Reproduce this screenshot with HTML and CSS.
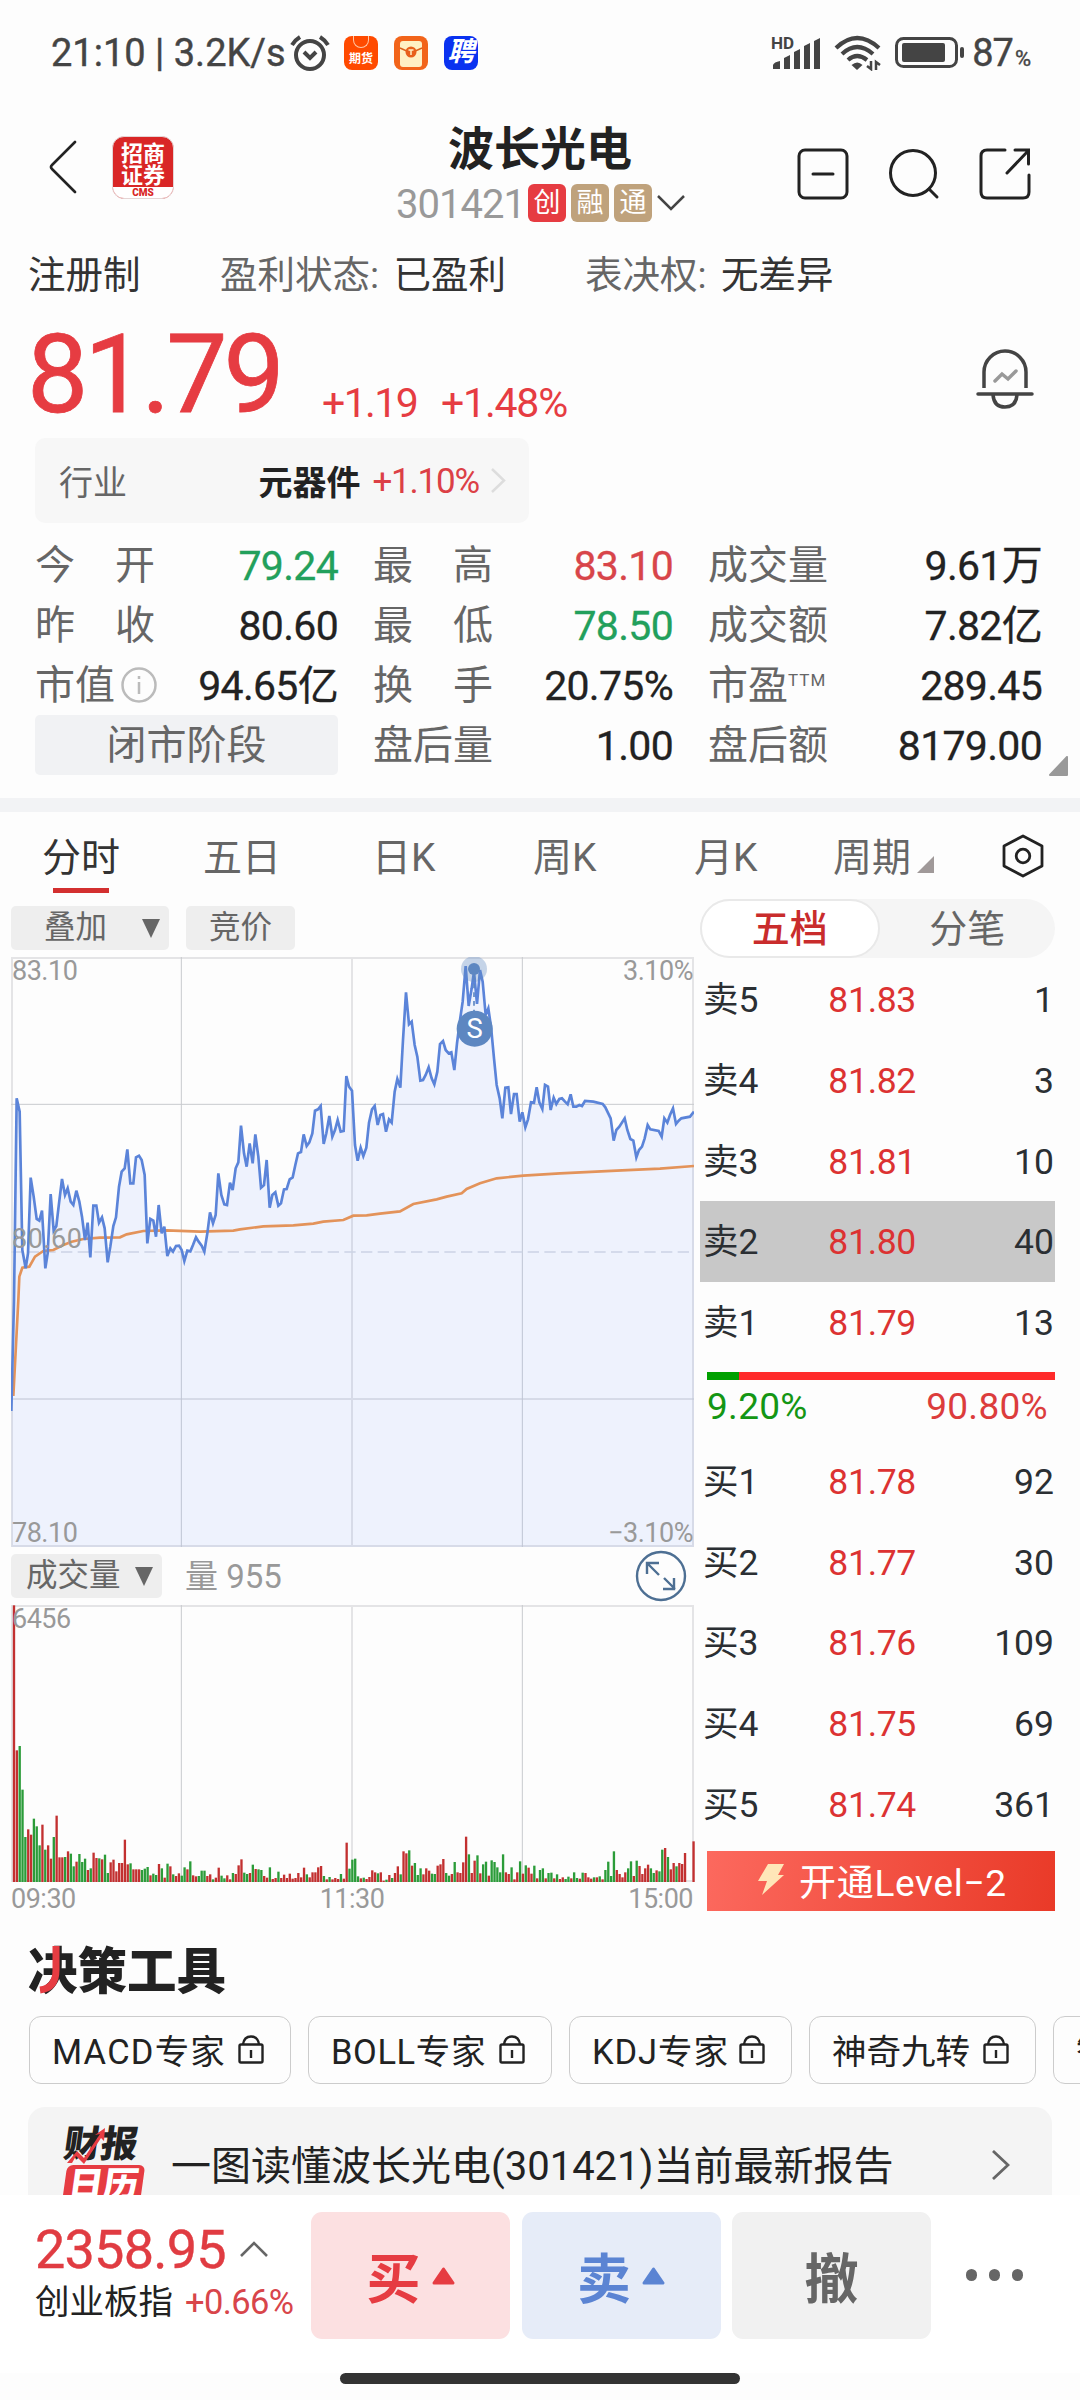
FILE: index.html
```html
<!DOCTYPE html>
<html lang="zh-CN">
<head>
    <meta charset="UTF-8">
    <title>波长光电 301421</title>
    <link rel="stylesheet" href="styles.css">
</head>
<body>
<div class="status">
    <span class="status-text">21:10 | 3.2K/s</span>
    <svg class="alarm" width="40" height="36" viewBox="0 0 40 36" fill="none" stroke="#444" stroke-width="4">
        <circle cx="20" cy="20" r="14"/>
        <path d="M14 17l6 6 6-6M2 10q3-5 8-8M38 10q-3-5-8-8"/>
    </svg>
    <span class="app app-futures"><i></i>期货</span>
    <span class="app app-mail"><svg width="34" height="34" viewBox="0 0 34 34"><rect x="6" y="5" width="22" height="26" rx="3" fill="#fff0c4"/><path d="M6 12l11 5 11-5" fill="none" stroke="#d9601c" stroke-width="1.5"/><circle cx="17" cy="16" r="5.5" fill="#e8601c"/><path d="M14.500 14h5M17 14v5" stroke="#fff0c4" stroke-width="1.500"/></svg></span>
    <span class="app app-job">聘</span>
    <div class="status-right">
        <svg class="signal" width="50" height="34" viewBox="0 0 50 34">
            <text x="0" y="13" class="hd">HD</text>
            <path d="M2 33v-4q1-3 7-4v8zM13 33v-11l6-3v14zM23 33v-17l6-3v20zM33 33V10l6-3v26zM43 33V5l6-3v31z" fill="#444"/>
        </svg>
        <svg class="wifi" width="47" height="36" viewBox="0 0 47 36" fill="none" stroke="#444" stroke-width="4.200">
            <path d="M2 13q21-20 43 0M8 19q15-14 31 0M14 25q9-8 19 0"/>
            <path d="M17.500 30q6-5 11 0l-5.500 5z" fill="#444" stroke="none"/>
            <path d="M37 26v8l-4-3M42 35v-8l4 3" stroke-width="2.500"/>
        </svg>
        <svg class="battery" width="69" height="32" viewBox="0 0 69 32">
            <rect x="1.500" y="1.500" width="60" height="28" rx="7" fill="none" stroke="#444" stroke-width="3"/>
            <rect x="7" y="6" width="43" height="19" rx="2" fill="#444"/>
            <rect x="65" y="10" width="4" height="11" rx="2" fill="#444"/>
        </svg>
        <span class="level">87<small>%</small></span>
    </div>
</div>

<div class="header">
    <svg class="back" width="28" height="54" viewBox="0 0 28 54" fill="none" stroke="#222" stroke-width="2.600" stroke-linecap="round"><path d="M26 2L3 25q-2 2 0 4l23 23"/></svg>
    <div class="broker"><div>招商<br>证券</div><b>CMS</b></div>
    <div class="stock">
        <h1>波长光电</h1>
        <div class="code"><span>301421</span><i class="tag red">创</i><i class="tag">融</i><i class="tag">通</i><svg width="28" height="16" viewBox="0 0 28 16" fill="none" stroke="#444" stroke-width="2.500"><path d="M1 1l13 13L27 1"/></svg></div>
    </div>
    <div class="actions">
        <svg width="52" height="52" viewBox="0 0 52 52" fill="none" stroke="#222" stroke-width="3" stroke-linecap="round"><rect x="2" y="2" width="48" height="48" rx="6"/><path d="M16 26h20"/></svg>
        <svg width="52" height="52" viewBox="0 0 52 52" fill="none" stroke="#222" stroke-width="3" stroke-linecap="round"><circle cx="25" cy="25" r="22.500"/><path d="M41 41l8 8"/></svg>
        <svg width="52" height="52" viewBox="0 0 52 52" fill="none" stroke="#222" stroke-width="3" stroke-linecap="round"><path d="M26 2H8Q2 2 2 8v36q0 6 6 6h36q6 0 6-6V27M36 2h13.500V16M49 3L28 25"/></svg>
    </div>
</div>

<div class="facts">
    <div class="fact-a"><b>注册制</b></div>
    <div class="fact-b">盈利状态: <b>已盈利</b></div>
    <div>表决权: <b>无差异</b></div>
</div>

<div class="quote">
    <span class="price">81.79</span>
    <span class="change">+1.19</span>
    <span class="change pct">+1.48%</span>
    <svg class="bell" width="58" height="60" viewBox="0 0 58 60" fill="none" stroke="#444" stroke-width="3.500" stroke-linecap="round">
        <path d="M8 39V23a21 21 0 0 1 42 0v16" stroke-linecap="butt"/><path d="M2 45h54M17 46q1 12 12 12t12-12"/><path d="M19 32l7-7 6 5 8-8" stroke="#999"/>
    </svg>
</div>

<div class="industry">
    <span>行业</span>
    <b>元器件</b>
    <em>+1.10%</em>
    <svg width="15" height="25" viewBox="0 0 15 25" fill="none" stroke="#ddd" stroke-width="2.500"><path d="M1 1l12 11.500L1 24"/></svg>
</div>

<div class="stats">
    <div><span class="lab">今 开</span><span class="val down">79.24</span></div>
    <div><span class="lab">最 高</span><span class="val up">83.10</span></div>
    <div><span class="lab">成交量</span><span class="val">9.61万</span></div>
    <div><span class="lab">昨 收</span><span class="val">80.60</span></div>
    <div><span class="lab">最 低</span><span class="val down">78.50</span></div>
    <div><span class="lab">成交额</span><span class="val">7.82亿</span></div>
    <div><span>市值</span><svg class="info" width="36" height="36" viewBox="0 0 36 36" fill="none" stroke="#bbb" stroke-width="2.500"><circle cx="18" cy="18" r="16.500"/><path d="M18 15v12M18 9v3"/></svg><span class="val">94.65亿</span></div>
    <div><span class="lab">换 手</span><span class="val">20.75%</span></div>
    <div><span>市盈</span><small>TTM</small><span class="val">289.45</span></div>
    <div class="phase">闭市阶段</div>
    <div><span class="lab">盘后量</span><span class="val">1.00</span></div>
    <div><span class="lab">盘后额</span><span class="val">8179.00</span></div>
    <svg class="corner" width="20" height="20"><path d="M18 1v18H1z" fill="#999" stroke="#999" stroke-width="2" stroke-linejoin="round"/></svg>
</div>

<div class="tabs">
    <span class="on">分时</span>
    <span>五日</span>
    <span>日K</span>
    <span>周K</span>
    <span>月K</span>
    <span class="more">周期<svg width="17" height="17"><path d="M17 0v17H0z" fill="#a09999"/></svg></span>
    <svg class="gear" width="42" height="44" viewBox="0 0 42 44" fill="none" stroke="#222" stroke-width="2.800" stroke-linejoin="round"><path d="M21 2l19 10v20L21 42 2 32V12z"/><circle cx="21" cy="22" r="6.800"/></svg>
</div>

<div class="panel">
    <div class="left">
        <div class="tools"><span class="btn overlay">叠加<i class="tri"></i></span><span class="btn auction">竞价</span></div>
        <div class="chart">
            <svg width="683" height="590" viewBox="33 411 2049 1770">
                <g fill="none" stroke="#c8cace" stroke-width="3">
                    <path d="M33 853H2082M33 1737H2082M544 411V2181M1567 411V2181"/>
                    <path d="M1056 411V2181" stroke="#e4e4e6" stroke-width="6"/>
                    <path d="M33 1296H2082" stroke="#d6dae2" stroke-width="5" stroke-dasharray="34 16"/>
                </g>
                <polygon class="area" id="area"/>
                <polyline class="avg" points="40,1728 55,1440 58,1370 67,1343 88,1340 105,1310 130,1293 160,1290 190,1275 215,1265 250,1257 300,1253 360,1252 380,1243 430,1233 500,1231 600,1235 700,1232 720,1228 790,1219 880,1216 940,1211 970,1205 1030,1200 1060,1187 1100,1186 1140,1181 1200,1174 1240,1152 1310,1138 1340,1130 1385,1120 1400,1107 1440,1090 1490,1075 1570,1067 1680,1060 1850,1052 1980,1046 2082,1038"/>
                <polyline class="line" id="line" points="34,1773 42,1440 50,835 59,875 67,1290 77,1345 84,1300 92,1073 101,1130 110,1197 118,1202 126,1172 136,1345 143,1300 152,1122 161,1232 169,1218 177,1150 186,1077 195,1125 203,1105 212,1145 220,1155 229,1112 238,1145 246,1190 255,1260 263,1208 271,1312 280,1157 289,1157 297,1208 306,1192 314,1225 323,1327 331,1280 340,1218 348,1192 357,1100 365,1055 374,1045 382,988 391,1090 400,1090 408,1012 417,1007 425,1020 434,1065 442,1270 451,1197 460,1202 468,1250 476,1155 485,1240 493,1220 502,1308 511,1285 519,1295 528,1278 537,1277 545,1290 553,1323 562,1292 571,1294 579,1275 588,1252 596,1265 605,1277 613,1295 622,1240 630,1177 639,1210 647,1185 655,1060 664,1125 673,1153 681,1155 690,1088 698,1110 707,1045 715,1027 723,917 732,1000 740,1040 749,970 758,1030 766,943 775,1010 783,1103 792,1095 800,1020 809,1163 817,1125 826,1117 835,1157 843,1150 852,1108 860,1107 869,1078 878,1072 886,1035 894,1000 903,996 911,943 920,978 928,967 937,940 945,872 954,868 962,858 971,972 979,940 988,888 997,950 1005,930 1013,900 1022,935 1031,933 1039,768 1047,800 1056,812 1065,975 1073,1022 1082,983 1090,1008 1099,983 1107,908 1116,868 1124,858 1133,915 1141,885 1149,882 1158,935 1167,898 1175,908 1184,815 1192,777 1201,803 1209,660 1218,517 1227,613 1235,605 1244,675 1252,710 1261,782 1269,780 1277,765 1286,742 1295,775 1303,793 1312,755 1320,672 1329,663 1337,690 1346,700 1354,697 1363,750 1371,670 1380,600 1388,545 1397,438 1406,558 1415,505 1422,455 1431,552 1440,450 1448,485 1457,585 1465,565 1473,620 1482,715 1490,795 1499,835 1507,895 1516,803 1525,802 1533,882 1542,822 1550,822 1559,905 1567,877 1576,922 1584,898 1593,847 1602,848 1610,802 1618,847 1627,867 1635,795 1644,800 1652,870 1661,833 1669,852 1678,837 1686,835 1695,845 1703,853 1712,823 1720,860 1729,860 1738,855 1746,858 1755,843 1780,845 1808,852 1816,862 1832,895 1841,962 1849,930 1858,920 1874,895 1882,930 1891,957 1900,962 1909,1012 1917,990 1926,980 1934,955 1943,915 1951,928 1976,933 1985,950 1993,895 2002,908 2010,885 2019,865 2028,912 2036,902 2044,895 2070,890 2082,875"/>
                <circle cx="1422" cy="447" r="39" fill="#5d87c1" opacity=".35"/>
                <circle cx="1422" cy="447" r="18" fill="#5d87c1"/>
                <path d="M1422 465V575" stroke="#5d87c1" stroke-width="5" stroke-dasharray="14 12"/>
                <circle cx="1424" cy="626" r="54" fill="#5d87c1"/>
                <text x="1424" y="655" class="sell">S</text>
            </svg>
            <span class="axis tl">83.10</span><span class="axis tr">3.10%</span>
            <span class="axis ml">80.60</span>
            <span class="axis bl">78.10</span><span class="axis br">−3.10%</span>
        </div>
        <div class="tools"><span class="btn volume">成交量<i class="tri"></i></span><span class="amount">量 955</span>
            <svg class="expand" width="52" height="52" viewBox="0 0 52 52" fill="none" stroke="#4d6f93" stroke-width="2.400"><circle cx="26" cy="26" r="24"/><path d="M12 24V13h12M12.500 13.500L24 25M29 28l11 11M39 28v11H28"/></svg>
        </div>
        <div class="chart vol">
            <svg width="685" height="277" viewBox="33 315 2055 831">
                <path d="M544 315V1146M1567 315V1146" stroke="#c8cace" stroke-width="3"/>
                <path d="M1056 315V1146" stroke="#e4e4e6" stroke-width="6"/>
                <g id="bars"></g>
            </svg>
            <span class="axis tl">6456</span>
        </div>
        <div class="times"><span>09:30</span><span>11:30</span><span>15:00</span></div>
    </div>

    <div class="book">
        <div class="switch"><span class="on">五档</span><span>分笔</span></div>
        <div class="row"><span>卖5</span><b>81.83</b><span>1</span></div>
        <div class="row"><span>卖4</span><b>81.82</b><span>3</span></div>
        <div class="row"><span>卖3</span><b>81.81</b><span>10</span></div>
        <div class="row picked"><span>卖2</span><b>81.80</b><span>40</span></div>
        <div class="row"><span>卖1</span><b>81.79</b><span>13</span></div>
        <div class="ratio"><i style="width: 9.2%"></i></div>
        <div class="ratio-text"><span>9.20%</span><b>90.80%</b></div>
        <div class="row"><span>买1</span><b>81.78</b><span>92</span></div>
        <div class="row"><span>买2</span><b>81.77</b><span>30</span></div>
        <div class="row"><span>买3</span><b>81.76</b><span>109</span></div>
        <div class="row"><span>买4</span><b>81.75</b><span>69</span></div>
        <div class="row"><span>买5</span><b>81.74</b><span>361</span></div>
        <div class="level2"><svg width="26" height="31" viewBox="0 0 26 31"><path d="M10 0h16l-6 11h6L4 31l5-14H0z" fill="#ffe6b8"/></svg>开通Level−2</div>
    </div>
</div>

<h2>决策工具<svg width="40" height="50" viewBox="0 0 40 50" fill="none" stroke="#e63c42" stroke-width="7"><path d="M27 2v24q0 18-16 20"/></svg></h2>

<div class="chips">
    <span class="chip">MACD专家<svg class="lock"><use href="#lock"/></svg></span>
    <span class="chip">BOLL专家<svg class="lock"><use href="#lock"/></svg></span>
    <span class="chip">KDJ专家<svg class="lock"><use href="#lock"/></svg></span>
    <span class="chip">神奇九转<svg class="lock"><use href="#lock"/></svg></span>
    <span class="chip">智</span>
</div>

<div class="report">
    <div class="report-logo">
        <b>财报</b><i>日历</i>
        <svg width="44" height="38" viewBox="0 0 44 38"><path d="M2 36l10-12 7 7L35 7l-5 1 10-7-1 13-3-3-17 26-8-8-4 7z" fill="#e63c42"/></svg>
    </div>
    <span>一图读懂波长光电(301421)当前最新报告</span>
    <svg width="19" height="30" viewBox="0 0 19 30" fill="none" stroke="#666" stroke-width="2.800"><path d="M2 1l15 14L2 29"/></svg>
</div>

<div class="bottom">
    <div class="index">
        <div class="index-top">2358.95<svg width="28" height="16" viewBox="0 0 28 16" fill="none" stroke="#666" stroke-width="2.600"><path d="M1 15L14 2l13 13"/></svg></div>
        <div class="index-sub">创业板指<em>+0.66%</em></div>
    </div>
    <div class="trade buy">买<svg width="23" height="18"><path d="M11.500 2l9.500 14H2z" fill="currentColor" stroke="currentColor" stroke-width="3" stroke-linejoin="round"/></svg></div>
    <div class="trade sell-btn">卖<svg width="23" height="18"><path d="M11.500 2l9.500 14H2z" fill="currentColor" stroke="currentColor" stroke-width="3" stroke-linejoin="round"/></svg></div>
    <div class="trade">撤</div>
    <div class="dots"><i></i><i></i><i></i></div>
</div>
<div class="home"></div>

<svg width="0" height="0" class="defs">
    <symbol id="lock" viewBox="0 0 26 29"><g fill="none" stroke="#222" stroke-width="2.400"><rect x="1.500" y="9.500" width="23" height="18" rx="1.500"/><path d="M5 9.500q1-8 8-8t8 8M13 15v8"/></g></symbol>
</svg>

<script>
    const line = document.getElementById("line");
    document.getElementById("area").setAttribute("points", "34,2181 " + line.getAttribute("points") + " 2082,2181");

    // one bar per minute: colour letter + height, "-" is a minute without trades
    const volumes = "r830 r395 g408 g277 g135 r158 r142 g190 g167 g110 r172 g97 r110 r70 g135 r199 r74 r74 g75 r92 " +
        "g85 g47 r61 g84 g60 g70 r36 g41 r88 r72 g71 r68 g82 g27 r59 r67 r32 r57 r57 r127 " +
        "r53 g56 r38 r38 r38 g36 g40 g45 r20 g25 g21 r54 g41 r13 g55 r47 g23 r18 r26 g19 " +
        "g44 r38 g62 r20 r17 g18 g34 g34 r18 r23 g8 r13 r43 g19 g11 r20 r8 g27 r24 r50 " +
        "r68 g28 g24 r27 g52 r39 g38 g36 r18 r13 g44 r9 r12 g31 r12 r22 r12 r25 r10 r12 " +
        "r27 r14 r43 g23 r14 r29 r29 r44 r48 g18 r8 g15 r8 r12 r9 g24 r10 r118 g40 g67 " +
        "g70 g17 r11 g13 r9 r15 r35 r29 g26 r29 r4 g7 r21 g12 r27 r47 g23 r92 r86 g95 " +
        "r49 g57 g21 g41 r23 r41 r34 g25 g24 r49 r53 r69 g27 g19 r24 g60 r29 r27 r59 r136 " +
        "g83 r27 r64 g80 r26 g53 g61 r19 g65 g60 g44 g29 g83 r29 r24 g44 r8 r29 g62 r25 " +
        "g50 r43 r25 g49 r11 g36 g41 r11 g27 g28 r11 g23 r9 r14 g9 g16 r11 g29 g12 r10 " +
        "g28 r27 r14 r10 g14 r14 g17 r8 g36 g61 g18 g92 r36 r24 r14 r29 g41 g62 r18 g64 " +
        "r48 r24 r41 r52 g41 g27 r35 g32 g97 r102 g75 r38 r57 g47 r57 r54 r87 - - r122";
    let bars = "";
    volumes.split(" ").forEach(function (v, i) {
        if (v === "-") return;
        const h = parseInt(v.slice(1));
        const x = 38.500 + i * 8.530;
        bars += '<rect class="' + v[0] + '" x="' + x.toFixed(1) + '" y="' + (1146 - h) + '" width="7" height="' + h + '"/>';
    });
    document.getElementById("bars").innerHTML = bars;
</script>
</body>
</html>
```

FILE: styles.css
```css
* {
    box-sizing: border-box;
}
body {
    margin: 0;
    width: 1080px;
    height: 2400px;
    overflow: hidden;
    background: #fdfdfd;
    color: #222;
    font-family: Roboto, "Noto Sans CJK SC", sans-serif;
    font-size: 40px;
}
svg {
    display: block;
    flex: none;
}
i, em {
    font-style: normal;
}
.defs {
    position: absolute;
}

/* status bar */
.status {
    display: flex;
    align-items: center;
    height: 105px;
    padding: 0 50px 0 51px;
    color: #444;
}
.status-text {
    width: 239px;
    font-size: 38px;
    -webkit-text-stroke: 0.4px #444;
    white-space: nowrap;
}
.alarm {
    margin-right: 14px;
}
.app {
    width: 34px;
    height: 34px;
    margin-right: 16px;
    border-radius: 8px;
    color: #fff;
    text-align: center;
    overflow: hidden;
    font-weight: 700;
}
.app-futures {
    background: #ff4a00;
    font-size: 12px;
    line-height: 14px;
}
.app-futures i {
    display: block;
    width: 16px;
    height: 12px;
    margin: 0 auto 4px;
    border: 1.5px solid #ffc9a8;
    border-top: 0;
    border-radius: 0 0 9px 9px;
}
.app-mail {
    background: #f2641a;
}
.app-job {
    background: #0a32f0;
    font-size: 27px;
    line-height: 33px;
    font-style: italic;
}
.status-right {
    display: flex;
    align-items: center;
    margin-left: auto;
}
.signal {
    overflow: visible;
}
.hd {
    font-size: 17px;
    font-weight: 700;
    fill: #444;
}
.wifi {
    margin: 0 14px 0 13px;
}
.level {
    margin-left: 8px;
    font-size: 38px;
    letter-spacing: -1px;
    -webkit-text-stroke: 0.4px #444;
    white-space: nowrap;
}
.level small {
    margin-left: 2px;
    font-size: 22px;
}

/* header */
.header {
    display: grid;
    grid-template-columns: 62px 299px 1fr 234px;
    height: 128px;
    padding: 0 49px 0 50px;
}
.back {
    margin: 35px 0 0 -1px;
}
.broker {
    width: 62px;
    height: 63px;
    margin-top: 31px;
    border: 1px solid #e5d5d5;
    border-radius: 12px;
    background: #d92626;
    color: #fff;
    text-align: center;
    font-size: 22px;
    font-weight: 700;
    line-height: 22px;
    overflow: hidden;
}
.broker div {
    height: 50px;
    padding-top: 3px;
    font-family: "Noto Sans CJK SC", sans-serif;
}
.broker b {
    display: block;
    height: 12px;
    background: #fff;
    color: #d92626;
    font-size: 10px;
    line-height: 11px;
}
.stock {
    width: 300px;
    margin-left: -15px;
}
h1 {
    margin: 14px 0 0 52px;
    font-size: 46px;
    font-weight: 700;
    line-height: 60px;
    white-space: nowrap;
}
.code {
    display: flex;
    align-items: center;
    height: 40px;
    margin-top: 4px;
    color: #999;
    font-size: 40px;
    white-space: nowrap;
}
.code span {
    width: 132px;
    padding-top: 2px;
    letter-spacing: -1px;
}
.tag {
    width: 38px;
    height: 38px;
    margin-right: 5px;
    border-radius: 6px;
    background: #bfa27c;
    color: #fff;
    font-size: 27px;
    line-height: 38px;
    text-align: center;
}
.tag.red {
    background: #e63c42;
}
.actions {
    display: flex;
    justify-content: space-between;
    margin-top: 43px;
}

.facts {
    display: flex;
    height: 80px;
    padding-left: 28px;
    color: #666;
    font-size: 37.500px;
    line-height: 84px;
    white-space: nowrap;
}
.facts b {
    margin-left: 5px;
    color: #333;
    font-weight: 400;
}
.fact-a b {
    margin: 0;
}
.fact-a {
    width: 192px;
}
.fact-b {
    width: 365px;
}

/* price */
.quote {
    display: flex;
    align-items: baseline;
    height: 125px;
    padding: 0 46px 0 27px;
    color: #e63c42;
    line-height: 123px;
}
.price {
    width: 295px;
    font-size: 109px;
    letter-spacing: -4px;
    -webkit-text-stroke: 0.8px #e63c42;
    position: relative;
    top: 1px;
}
.change {
    width: 119px;
    font-size: 41px;
    letter-spacing: -1.600px;
    position: relative;
    top: 6px;
}
.change.pct {
    flex: 1;
    letter-spacing: -1.200px;
}
.bell {
    align-self: flex-start;
    margin-top: 36px;
}
.industry {
    display: flex;
    align-items: center;
    width: 494px;
    height: 85px;
    padding: 0 23px 0 24px;
    margin-left: 35px;
    border-radius: 10px;
    background: #f7f7f7;
    color: #666;
    font-size: 34px;
}
.industry b {
    margin-left: auto;
    color: #222;
}
.industry em {
    margin: 2px 12px 0 12px;
    color: #dc4046;
    font-size: 35px;
    letter-spacing: -1.200px;
}

.stats {
    display: grid;
    position: relative;
    grid-template-columns: 303px 300px 334px;
    grid-auto-rows: 60px;
    column-gap: 35px;
    height: 275px;
    padding: 12px 0 0 35px;
    color: #666;
    line-height: 62px;
}
.stats > div {
    display: flex;
    white-space: nowrap;
}
.lab {
    width: 120px;
    text-align-last: justify;
}
.val {
    margin-left: auto;
    color: #222;
    font-size: 41px;
    letter-spacing: -0.700px;
    -webkit-text-stroke: 0.3px currentColor;
}
.val.up {
    color: #d8454a;
}
.val.down {
    color: #22a05c;
}
.info {
    margin: 12px 0 0 6px;
}
.stats small {
    font-size: 17px;
    line-height: 50px;
    letter-spacing: 1px;
}
.stats .phase {
    justify-content: center;
    border-radius: 5px;
    background: #f1f2f4;
}
.corner {
    position: absolute;
    right: 11px;
    bottom: 22px;
}

/* period tabs */
.tabs {
    display: flex;
    position: relative;
    height: 95px;
    padding: 0 36px 0 42px;
    border-top: 14px solid #f2f3f5;
    color: #666;
    font-size: 39px;
    line-height: 92px;
    white-space: nowrap;
}
.tabs > span {
    width: 161px;
}
.tabs .on {
    color: #333;
    position: relative;
}
.tabs .on::after {
    content: "";
    position: absolute;
    left: 11px;
    bottom: 0;
    width: 56px;
    height: 5px;
    background: #d32f2f;
}
.tabs > span:nth-child(2) {
    width: 169px;
}
.tabs > span:nth-child(5) {
    width: 139px;
}
.tabs > .more {
    display: flex;
    align-items: center;
    width: auto;
    height: 92px;
}
.more svg {
    margin: 12px 0 0 6px;
}
.gear {
    margin: 22px 0 0 auto;
}

/* chart */
.panel {
    display: flex;
    gap: 6px;
    height: 1023px;
    padding-left: 11px;
}
.left {
    width: 683px;
    padding-top: 12px;
}
.tools {
    display: flex;
    position: relative;
    height: 44px;
    margin: 1px 0 7px;
    font-size: 31.500px;
    line-height: 46px;
}
.btn {
    display: flex;
    align-items: center;
    border-radius: 5px;
    background: #eee;
    color: #666;
}
.tri {
    border: 9.500px solid transparent;
    border-top: 19px solid #666;
    border-bottom: 0;
}
.overlay {
    width: 158px;
    padding: 0 9px 0 33px;
    justify-content: space-between;
}
.auction {
    margin-left: 17px;
    padding: 0 23px;
    width: 109px;
}
.volume {
    width: 151px;
    padding: 0 9px 0 15px;
    justify-content: space-between;
}
.amount {
    margin-left: 23px;
    color: #999;
    font-size: 33px;
}
.expand {
    position: absolute;
    left: 624px;
    top: -4px;
}
.chart {
    position: relative;
    height: 590px;
    margin-bottom: 7px;
    box-shadow: inset 0 0 0 2px #e4e4e6;
}
.chart.vol {
    height: 277px;
    margin: 0;
}
.area {
    fill: #6e96ff;
    opacity: .1;
}
.line {
    fill: none;
    stroke: #5b84d9;
    stroke-width: 8;
}
.avg {
    fill: none;
    stroke: #e3935a;
    stroke-width: 8;
}
.sell {
    fill: #fff;
    font-size: 82px;
    text-anchor: middle;
}
.r {
    fill: #c23030;
}
.g {
    fill: #2b9c39;
}
.axis, .times {
    color: #999;
    font-size: 27px;
    line-height: 29px;
    letter-spacing: -0.500px;
}
.axis {
    position: absolute;
}
.tl {
    left: 1px;
    top: 0;
}
.tr {
    right: 1px;
    top: 0;
}
.ml {
    left: 1px;
    top: 268px;
    letter-spacing: 0.500px;
}
.bl {
    left: 1px;
    bottom: -1px;
}
.br {
    right: 1px;
    bottom: -1px;
}
.vol svg {
    width: 685px;
}
.times {
    display: flex;
    justify-content: space-between;
    padding: 3px 1px 0 0;
}

/* order book */
.book {
    width: 355px;
    padding-top: 6px;
}
.switch {
    display: flex;
    height: 59px;
    margin-bottom: 1px;
    border-radius: 30px;
    background: #f5f5f5;
    color: #666;
    font-size: 38px;
    line-height: 60px;
    text-align: center;
}
.switch span {
    flex: 1;
}
.switch .on {
    border: 2px solid #e9e9e9;
    border-radius: 30px;
    background: #fff;
    color: #c92c2c;
    font-weight: 500;
    line-height: 56px;
}
.row {
    display: flex;
    height: 80.750px;
    padding: 0 1px 0 3px;
    color: #2b2f33;
    font-size: 35.500px;
    line-height: 83px;
}
.row span {
    width: 124px;
}
.row b {
    width: 89px;
    color: #dc3232;
    font-weight: 400;
    letter-spacing: -0.300px;
    text-align: right;
}
.row span:last-child {
    flex: 1;
    text-align: right;
}
.picked {
    background: #c8c8c8;
}
.ratio {
    height: 8px;
    margin: 9px 0 0 7px;
    background: #ff2a2a;
}
.ratio i {
    display: block;
    height: 8px;
    background: #00a000;
}
.ratio-text {
    display: flex;
    justify-content: space-between;
    height: 61px;
    padding: 0 7px 0 7px;
    color: #149614;
    font-size: 37px;
    line-height: 54px;
    letter-spacing: 0.300px;
}
.ratio-text b {
    color: #dc3c3c;
    font-weight: 400;
}
.level2 {
    display: flex;
    align-items: center;
    height: 60px;
    margin: 6px 0 0 7px;
    padding: 0 0 2px 51px;
    background: linear-gradient(100deg, #fc695e, #e93a28);
    color: #fff;
    font-size: 37px;
    letter-spacing: 0.700px;
    white-space: nowrap;
}
.level2 svg {
    margin-right: 15px;
}

/* tools */
h2 {
    position: relative;
    height: 100px;
    margin: 0 0 0 28px;
    font-family: "Noto Sans CJK SC", sans-serif;
    font-size: 49.500px;
    font-weight: 900;
    line-height: 103px;
}
h2 svg {
    position: absolute;
    left: 1px;
    top: 28px;
}
.chips {
    display: flex;
    gap: 17px;
    height: 91px;
    padding-left: 29px;
    overflow: hidden;
}
.chip {
    display: flex;
    flex: none;
    align-items: center;
    width: 262px;
    height: 68px;
    padding: 0 0 2px 22px;
    border: 1.500px solid #ccc;
    border-radius: 12px;
    font-size: 34.500px;
    letter-spacing: 1.200px;
    white-space: nowrap;
}
.chip:nth-child(2) {
    width: 244px;
    letter-spacing: 0.600px;
}
.chip:nth-child(3) {
    width: 223px;
    letter-spacing: 0.900px;
}
.chip:nth-child(4) {
    width: 227px;
    letter-spacing: 0;
}
.lock {
    width: 26px;
    height: 29px;
    margin: 0 26px 0 auto;
}
.report {
    display: flex;
    height: 88px;
    margin: 0 28px;
    padding: 0 42px 0 34px;
    border-radius: 17px 17px 0 0;
    background: #f4f4f4;
    line-height: 119px;
    white-space: nowrap;
    overflow: hidden;
}
.report span {
    flex: 1;
}
.report > svg {
    margin-top: 43px;
}
.report-logo {
    position: relative;
    width: 109px;
    padding: 20px 0 0 2px;
    line-height: 36px;
}
.report-logo b {
    display: block;
    width: 78px;
    font-size: 37px;
    font-weight: 900;
    transform: skewX(-8deg);
}
.report-logo i {
    display: block;
    width: 78px;
    height: 46px;
    margin-top: 2px;
    border-radius: 6px;
    background: #e63c42;
    color: #fff;
    font-size: 35px;
    font-weight: 900;
    line-height: 42px;
    text-align: center;
    transform: skewX(-8deg);
}
.report-logo svg {
    position: absolute;
    left: 3px;
    top: 20px;
}

/* bottom bar */
.bottom {
    display: flex;
    height: 178px;
    padding: 17px 0 0 35px;
    background: #fff;
}
.index {
    width: 276px;
    white-space: nowrap;
}
.index-top {
    display: flex;
    align-items: center;
    height: 74px;
    color: #e03c42;
    font-size: 54px;
    letter-spacing: -0.800px;
    -webkit-text-stroke: 0.4px #e03c42;
}
.index-top svg {
    margin-left: 14px;
}
.index-sub {
    font-size: 34.500px;
    line-height: 33px;
}
.index-sub em {
    margin-left: 12px;
    color: #d8454a;
    letter-spacing: -0.600px;
}
.trade {
    display: flex;
    align-items: center;
    justify-content: center;
    width: 199px;
    height: 127px;
    margin-right: 11.500px;
    border-radius: 11px;
    background: #f1f1f1;
    color: #666;
    font-size: 54px;
    font-weight: 700;
}
.trade svg {
    margin-left: 11px;
}
.buy {
    background: #fce0e1;
    color: #e63c42;
}
.sell-btn {
    background: #e6ecf8;
    color: #5b84d3;
}
.dots {
    display: flex;
    gap: 11.500px;
    margin: 57px 0 0 23px;
}
.dots i {
    width: 11.500px;
    height: 11.500px;
    border-radius: 50%;
    background: #666;
}
.home {
    width: 400px;
    height: 11px;
    margin: 0 auto;
    border-radius: 6px;
    background: #333;
}
```
